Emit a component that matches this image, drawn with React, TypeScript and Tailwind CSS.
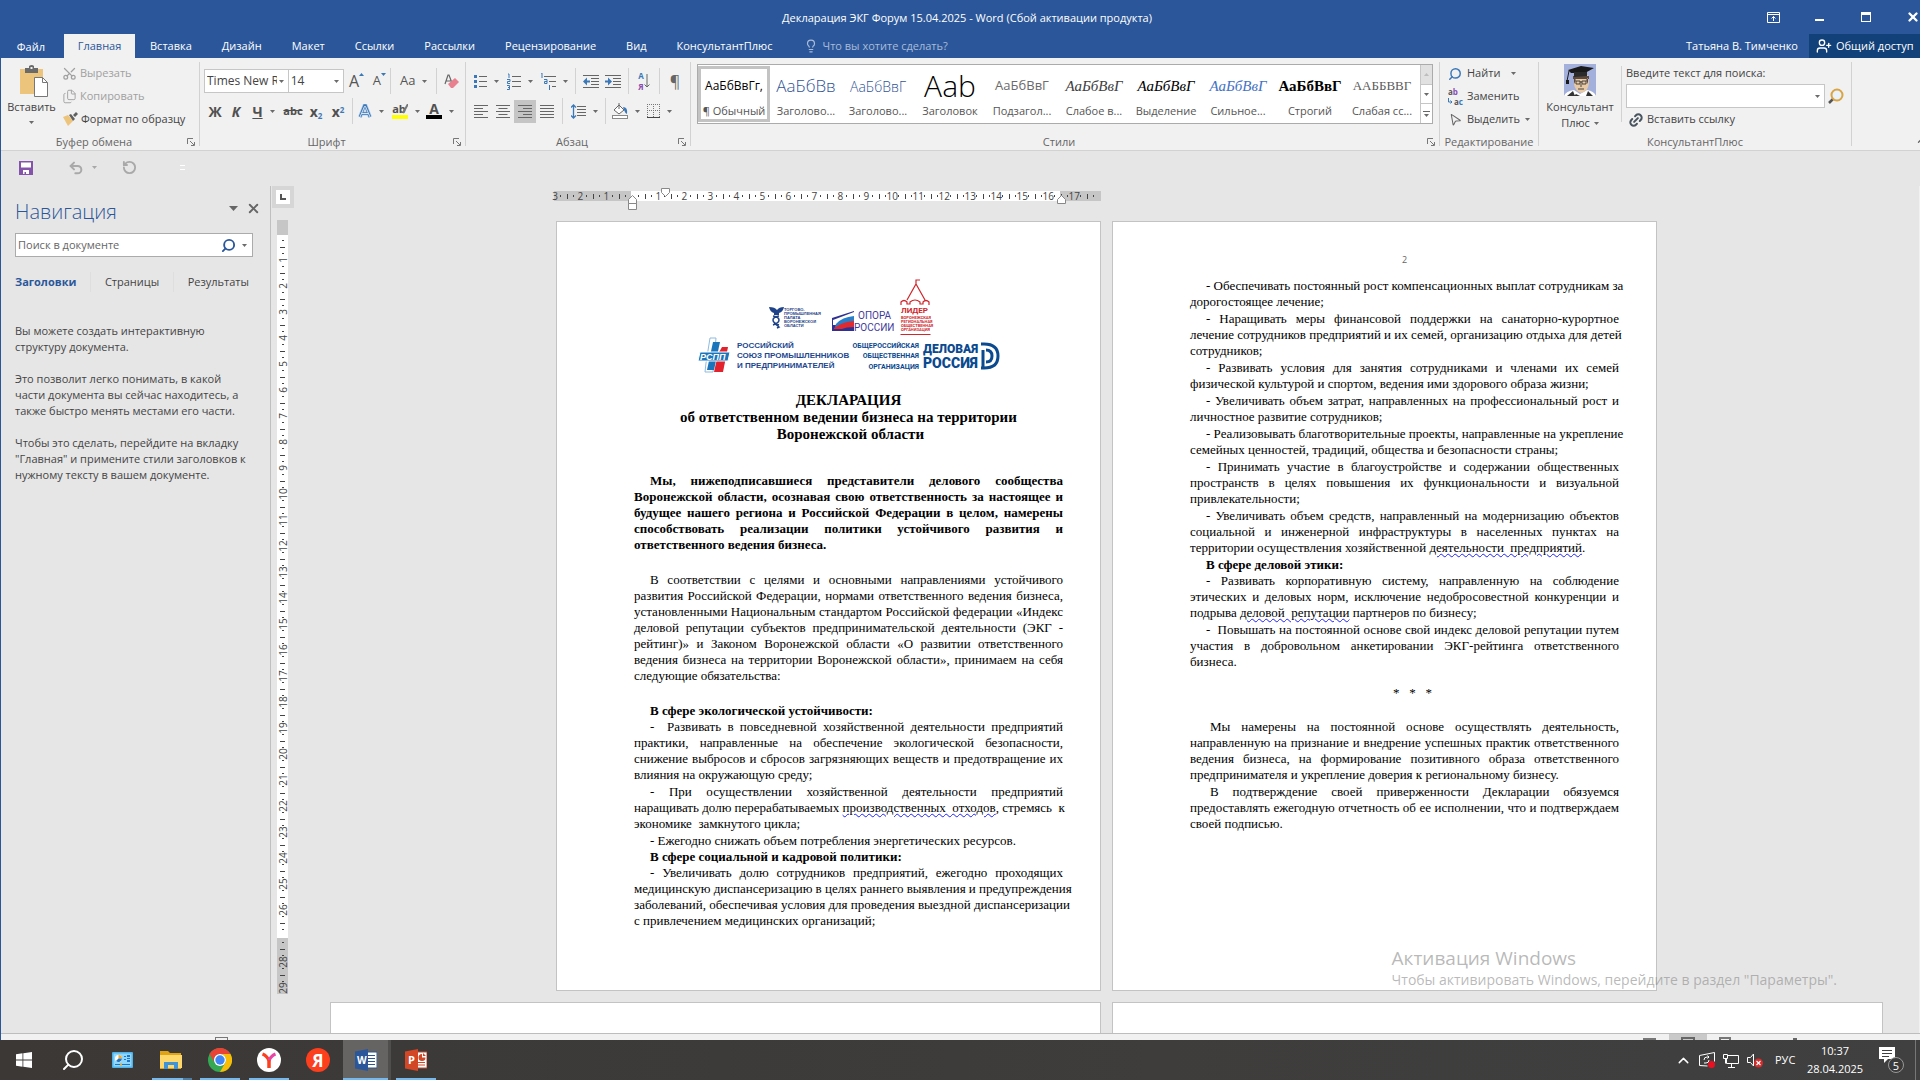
import type { ReactNode } from 'react';
import {
    ChevronUp,
    Lightbulb,
    Scissors,
    Search,
    Files,
    X,
    Undo2,
    RotateCcw,
    UserPlus,
    Link2,
    MousePointer2,
} from 'lucide-react';

const tabs = ['Вставка', 'Дизайн', 'Макет', 'Ссылки', 'Рассылки', 'Рецензирование', 'Вид', 'КонсультантПлюс'];

const styles = [
    { sample: 'АаБбВвГг,', name: '¶ Обычный', look: 'text-[12px] text-black' },
    { sample: 'АаБбВв', name: 'Заголово...', look: 'text-[17px] font-light text-[#2f5496]' },
    { sample: 'АаБбВвГ', name: 'Заголово...', look: 'text-[14px] font-light text-[#2f5496]' },
    { sample: 'Aab', name: 'Заголовок', look: 'text-[30px] leading-8 font-light text-black' },
    { sample: 'АаБбВвГ', name: 'Подзагол...', look: 'text-[13px] text-[#6a6a6a]' },
    { sample: 'АаБбВвГ', name: 'Слабое в...', look: "text-[15px] italic text-[#404040] font-['Liberation_Serif',serif]" },
    { sample: 'АаБбВвГ', name: 'Выделение', look: "text-[15px] italic text-black font-['Liberation_Serif',serif]" },
    { sample: 'АаБбВвГ', name: 'Сильное...', look: "text-[15px] italic text-[#4472c4] font-['Liberation_Serif',serif]" },
    { sample: 'АаБбВвГ', name: 'Строгий', look: "text-[15px] font-bold text-black font-['Liberation_Serif',serif]" },
    { sample: 'ААББВВГ', name: 'Слабая сс...', look: "text-[13px] text-[#5a5a5a] font-['Liberation_Serif',serif]" },
];

function Wavy({ children }: { children: ReactNode }) {
    return (
        <span className="underline decoration-[#2020ff] decoration-wavy decoration-1 underline-offset-1">{children}</span>
    );
}

function Caret({ className = '' }: { className?: string }) {
    return (
        <svg viewBox="0 0 5 3" className={`h-[3px] w-[5px] shrink-0 ${className}`} fill="#6b6b6b">
            <path d="M0 0h5L2.5 3z" />
        </svg>
    );
}

function Sep() {
    return <div className="mx-1 h-[26px] w-px bg-[#d2d2d2]" />;
}

function Tool({ label, width, arrow, active, children }: any) {
    return (
        <button
            aria-label={label}
            className={`flex h-[23px] items-center justify-center gap-[7px] ${width} ${active ? 'bg-[#c5c5c5]' : ''}`}
        >
            {children}
            {arrow && <Caret />}
        </button>
    );
}

function Group({ title, launcher, className = '', children }: any) {
    return (
        <section className={`my-1 flex flex-col border-r border-[#d2d2d2] ${className}`}>
            <div className="min-h-0 flex-1">{children}</div>
            <div className="flex h-3 items-start">
                <span className="flex-1 text-center text-[11px] leading-4 text-[#666]">{title}</span>
                {launcher && (
                    <button aria-label={`${title}: параметры`} className="mt-1 mr-1">
                        <svg viewBox="0 0 8 8" className="size-2" fill="none" stroke="#777">
                            <path d="M.5 6V.5H6M3 3l4 4M7.5 4v3.5H4" />
                        </svg>
                    </button>
                )}
            </div>
        </section>
    );
}

function Lines({ kind }: { kind: string }) {
    const widths = kind === 'full' ? [14, 14, 14, 14, 14] : [14, 9, 14, 9, 14];
    return (
        <svg viewBox="0 0 14 13" className="h-[13px] w-[14px]" fill="#666">
            {widths.map((w, i) => (
                <rect
                    key={i}
                    x={kind === 'right' ? 14 - w : kind === 'center' ? (14 - w) / 2 : 0}
                    y={i * 3}
                    width={w}
                    height="1"
                />
            ))}
        </svg>
    );
}

function Clipboard() {
    return (
        <Group title="Буфер обмена" launcher className="w-[199px]">
            <div className="flex">
                <button className="flex w-[61px] flex-col items-center pt-[3px] text-[11px] leading-4 text-[#444]">
                    <svg viewBox="0 0 28 32" className="ml-1 h-8 w-7">
                        <path d="M0 4h23v25H0z" fill="#edc47c" />
                        <path d="M5 3h4V1q3-2 5 0v2h4v5H5z" fill="#6a6a6a" />
                        <rect x="10.500" y="2" width="2" height="2" fill="#f1f1f1" />
                        <path d="M14.500 12.500h8l5 5v14h-13z" fill="#fff" stroke="#777" />
                        <path d="M22.500 12.500v5h5" fill="none" stroke="#777" />
                    </svg>
                    <span className="mt-[2px] text-[11px]">Вставить</span>
                    <Caret className="mt-[6px]" />
                </button>
                <div className="flex flex-col text-[11px] text-[#a0a0a0]">
                    <button className="flex h-[23px] items-center gap-[3px]">
                        <Scissors className="size-[15px] -rotate-90" strokeWidth={2} />
                        Вырезать
                    </button>
                    <button className="flex h-[23px] items-center gap-[3px]">
                        <Files className="size-[15px]" strokeWidth={1.5} />
                        Копировать
                    </button>
                    <button className="flex h-[23px] items-center gap-[3px] text-[#444]">
                        <svg viewBox="0 0 16 15" className="h-[15px] w-[16px]">
                            <path d="M1 5l5-2 5 6-5 5z" fill="#edc47c" />
                            <path d="M7 3l2-1 4 5-2 2zM11 3l3-3 2 2-3 3z" fill="#5f5f5f" />
                        </svg>
                        Формат по образцу
                    </button>
                </div>
            </div>
        </Group>
    );
}

function FontGroup() {
    return (
        <Group title="Шрифт" launcher className="w-[266px]">
            <div className="flex items-center pt-[6px] pl-1">
                <div className="flex h-6 w-[85px] items-center border border-[#c6c6c6] bg-white pr-1">
                    <input
                        aria-label="Шрифт"
                        defaultValue="Times New Roman"
                        className="w-0 flex-1 pl-[2px] text-[12px] text-[#444] outline-none"
                    />
                    <Caret className="ml-[2px]" />
                </div>
                <div className="flex h-6 w-[56px] items-center border border-l-0 border-[#c6c6c6] bg-white pr-1">
                    <input
                        aria-label="Размер шрифта"
                        defaultValue="14"
                        className="w-0 flex-1 pl-[2px] text-[12px] text-[#444] outline-none"
                    />
                    <Caret />
                </div>
                <Tool label="Увеличить размер" width="w-6">
                    <span className="flex text-[16px] text-[#555]">
                        A
                        <svg viewBox="0 0 5 3" className="mt-1 h-[3px] w-[5px]" fill="#3b78b8">
                            <path d="M0 3h5L2.500 0z" />
                        </svg>
                    </span>
                </Tool>
                <Tool label="Уменьшить размер" width="w-[22px]">
                    <span className="flex text-[13px] text-[#555]">
                        A
                        <svg viewBox="0 0 5 3" className="mt-[2px] h-[3px] w-[5px]" fill="#3b78b8">
                            <path d="M0 0h5L2.500 3z" />
                        </svg>
                    </span>
                </Tool>
                <div className="h-[26px] w-px bg-[#d2d2d2]" />
                <Tool label="Регистр" width="w-[45px]" arrow>
                    <span className="text-[13px] text-[#555]">Aa</span>
                </Tool>
                <div className="h-[26px] w-px bg-[#d2d2d2]" />
                <Tool label="Очистить формат" width="w-7">
                    <svg viewBox="0 0 15 14" className="h-[14px] w-[15px]">
                        <path d="M1 10L4 1h1l3 8M2 7h5" fill="none" stroke="#666" strokeWidth="1.200" />
                        <path d="M4 10l7-6 4 4-6 6H7z" fill="#e8808f" />
                    </svg>
                </Tool>
            </div>
            <div className="flex items-center pt-1 pl-1 text-[14px] font-bold text-[#505050]">
                <Tool label="Полужирный" width="w-[22px]">Ж</Tool>
                <Tool label="Курсив" width="w-5"><i>К</i></Tool>
                <Tool label="Подчёркнутый" width="w-[35px]" arrow><u>Ч</u></Tool>
                <Tool label="Зачёркнутый" width="w-6"><s className="text-[11px]">abc</s></Tool>
                <Tool label="Подстрочный" width="w-[22px]">
                    <span>x<sub className="text-[8px] text-[#3b78b8]">2</sub></span>
                </Tool>
                <Tool label="Надстрочный" width="w-[22px]">
                    <span>x<sup className="text-[8px] text-[#3b78b8]">2</sup></span>
                </Tool>
                <div className="ml-[3px] h-[26px] w-px bg-[#d2d2d2]" />
                <Tool label="Эффекты" width="w-9" arrow>
                    <svg viewBox="0 0 14 14" className="size-[14px]">
                        <path d="M2 13L6.500 1.500h1L12 13M4 9.500h6" fill="none" stroke="#b5d0ea" strokeWidth="4" />
                        <path d="M2 13L6.500 1.500h1L12 13M4 9.500h6" fill="none" stroke="#3b78b8" strokeWidth="2.600" />
                        <path d="M2 13L6.500 2.500h1L12 13M4 9.500h6" fill="none" stroke="#fff" strokeWidth=".8" />
                    </svg>
                </Tool>
                <Tool label="Цвет выделения" width="w-[34px]" arrow>
                    <span className="flex h-4 w-4 items-center justify-center border-b-4 border-[#ff0] text-[11px] leading-3">
                        ab
                        <svg viewBox="0 0 6 10" className="-ml-1 h-[10px] w-[6px] shrink-0" stroke="#777" strokeWidth="2">
                            <path d="M6 0L1 9" />
                        </svg>
                    </span>
                </Tool>
                <Tool label="Цвет текста" width="w-[34px]" arrow>
                    <span className="flex h-4 w-4 items-center justify-center border-b-4 border-black text-[14px] leading-3">
                        A
                    </span>
                </Tool>
            </div>
        </Group>
    );
}

function ParagraphGroup() {
    return (
        <Group title="Абзац" launcher className="w-[225px]">
            <div className="flex items-center pt-[6px] pl-1">
                <Tool label="Маркеры" width="w-[33px]" arrow>
                    <svg viewBox="0 0 13 15" className="h-[15px] w-[13px]">
                        <path d="M0 1h3v3H0zM0 6h3v3H0zM0 11h3v3H0z" fill="#3b78b8" />
                        <path d="M5 2.500h8M5 7.500h8M5 12.500h8" stroke="#666" />
                    </svg>
                </Tool>
                <Tool label="Нумерация" width="w-[34px]" arrow>
                    <svg viewBox="0 0 14 17" className="h-[17px] w-[14px]">
                        <path d="M1 1h1v4M0 6.500h3v2H.5v2H3M0 12.500h2.500v4H0M1 14.500h1" fill="none" stroke="#3b78b8" />
                        <path d="M5 3.500h9M5 8.500h9M5 13.500h9" stroke="#666" />
                    </svg>
                </Tool>
                <Tool label="Многоуровневый список" width="w-[34px]" arrow>
                    <svg viewBox="0 0 16 17" className="h-[17px] w-4">
                        <path d="M1 0h1v5M4 6.500h3v4H4.500v-2H7M9.500 12v5" fill="none" stroke="#3b78b8" />
                        <path d="M4 3.500h12M9 8.500h7M12 13.500h4" stroke="#666" />
                    </svg>
                </Tool>
                <Sep />
                <Tool label="Уменьшить отступ" width="w-[22px]">
                    <svg viewBox="0 0 16 13" className="h-[13px] w-4">
                        <path d="M0 .5h16M8 3.500h8M8 6.500h8M8 9.500h8M0 12.500h16" stroke="#666" />
                        <path d="M0 6.500l4-4v3h3v2H4v3z" fill="#3b78b8" />
                    </svg>
                </Tool>
                <Tool label="Увеличить отступ" width="w-[22px]">
                    <svg viewBox="0 0 16 13" className="h-[13px] w-4">
                        <path d="M0 .5h16M8 3.500h8M8 6.500h8M8 9.500h8M0 12.500h16" stroke="#666" />
                        <path d="M7 6.500l-4-4v3H0v2h3v3z" fill="#3b78b8" />
                    </svg>
                </Tool>
                <Sep />
                <Tool label="Сортировка" width="w-[22px]">
                    <span className="flex">
                        <span className="flex flex-col text-[8px] leading-[11px] font-bold text-[#3b78b8]">
                            <span>А</span>
                            <span className="text-[#8e4bb0]">Я</span>
                        </span>
                        <svg viewBox="0 0 6 14" className="mt-1 h-[14px] w-[6px]" fill="none" stroke="#666">
                            <path d="M3 0v13M.5 10.500L3 13l2.500-2.500" />
                        </svg>
                    </span>
                </Tool>
                <Sep />
                <Tool label="Знаки абзаца" width="w-[22px]">
                    <span className="text-[16px] text-[#666]">¶</span>
                </Tool>
            </div>
            <div className="flex items-center pt-1 pl-1">
                <Tool label="По левому краю" width="w-[22px]"><Lines kind="left" /></Tool>
                <Tool label="По центру" width="w-[22px]"><Lines kind="center" /></Tool>
                <Tool label="По правому краю" width="w-[22px]" active><Lines kind="right" /></Tool>
                <Tool label="По ширине" width="w-[22px]"><Lines kind="full" /></Tool>
                <Sep />
                <Tool label="Интервал" width="w-[34px]" arrow>
                    <svg viewBox="0 0 15 15" className="size-[15px]">
                        <path d="M2.500 1v13M0 3.500L2.500 1 5 3.500M0 11.500L2.500 14 5 11.500" fill="none" stroke="#3b78b8" strokeWidth="1.300" />
                        <path d="M6 2.500h9M6 5.500h9M6 8.500h9M6 11.500h9" stroke="#666" />
                    </svg>
                </Tool>
                <Sep />
                <Tool label="Заливка" width="w-[32px]" arrow>
                    <svg viewBox="0 0 16 16" className="size-4">
                        <path d="M2 7l5-5 5 5-5 4zM7 0v6" fill="#fff" stroke="#666" />
                        <path d="M11 4q5 0 4 7-2-1-3-4z" fill="#3b78b8" />
                        <rect x=".5" y="12.500" width="15" height="3" fill="#fff" stroke="#888" />
                    </svg>
                </Tool>
                <Tool label="Границы" width="w-[34px]" arrow>
                    <svg viewBox="0 0 13 14" className="h-[14px] w-[13px]" fill="none" stroke="#777">
                        <path d="M.5 0v13M6.500 0v13M12.500 0v13M0 .5h13M0 6.500h13" strokeDasharray="1 1" />
                        <path d="M0 13.500h13" stroke="#444" />
                    </svg>
                </Tool>
            </div>
        </Group>
    );
}

function StylesGroup() {
    return (
        <Group title="Стили" launcher className="min-w-0 flex-1">
            <div className="mt-[2px] mr-[6px] ml-[6px] flex h-[60px] border border-[#ababab] bg-white">
                <div className="flex flex-1 justify-between pr-[2px]">
                    {styles.map((s, i) => (
                        <button
                            key={i}
                            className={`my-px flex w-[72px] flex-col items-center border-[3px] ${i === 0 ? 'border-[#c3c3c3]' : 'border-transparent'}`}
                        >
                            <span className="flex h-[34px] items-center">
                                <span className={`whitespace-nowrap ${s.look}`}>{s.sample}</span>
                            </span>
                            <span className="h-4 text-[11px] leading-4 whitespace-nowrap text-[#555]">{s.name}</span>
                        </button>
                    ))}
                </div>
                <div className="flex w-[14px] flex-col border-l border-[#c6c6c6]">
                    <button aria-label="Вверх" className="flex flex-1 items-center justify-center bg-[#e1e1e1]">
                        <Caret className="rotate-180 opacity-30" />
                    </button>
                    <button aria-label="Вниз" className="flex flex-1 items-center justify-center border-y border-[#c6c6c6]">
                        <Caret />
                    </button>
                    <button aria-label="Все стили" className="flex flex-1 flex-col items-center justify-center gap-[2px]">
                        <span className="h-px w-[7px] bg-[#666]" />
                        <Caret />
                    </button>
                </div>
            </div>
        </Group>
    );
}

function EditingGroup() {
    return (
        <Group title="Редактирование" className="w-[99px]">
            <div className="flex flex-col pl-2 text-[11px] text-[#444]">
                <button className="flex h-[23px] items-center gap-[5px]">
                    <Search className="size-[14px] -scale-x-100 text-[#3b78b8]" strokeWidth={2.5} />
                    Найти <Caret className="ml-[6px]" />
                </button>
                <button className="flex h-[23px] items-center gap-[3px]">
                    <svg viewBox="0 0 16 18" className="h-[18px] w-4" fontSize="8" fontWeight="bold">
                        <text x="0" y="7" fill="#555">a<tspan fill="#8e4bb0">b</tspan></text>
                        <text x="6" y="17" fill="#555">a<tspan fill="#3b78b8">c</tspan></text>
                        <path d="M.5 10v4H4M2.500 12.500L4 14l-1.500 1.500" fill="none" stroke="#3b78b8" />
                    </svg>
                    Заменить
                </button>
                <button className="flex h-[23px] items-center gap-[5px]">
                    <MousePointer2 className="size-[14px] rotate-12 text-[#666]" strokeWidth={1.8} />
                    Выделить <Caret />
                </button>
            </div>
        </Group>
    );
}

function ConsultantGroup() {
    return (
        <Group title="КонсультантПлюс" className="w-[313px]">
            <div className="flex">
                <button className="flex w-[82px] flex-col items-center pt-[2px] text-[11px] leading-4 text-[#444]">
                    <svg viewBox="0 0 32 32" className="size-8">
                        <rect width="32" height="32" fill="#a3b0dc" />
                        <path d="M0 32q2-5 10-6l6 4 7-4q7 1 9 6z" fill="#fff" />
                        <path d="M3 32l6-5 2 5zM12 30l4 2h-6zM22 32l2-5 5 5z" fill="#333" />
                        <path d="M10 11h14l1 8q-1 9-8 10-6-2-7-9z" fill="#e9c9a4" />
                        <path d="M9 12h16v3H9zM10 20v-6l2 2zM24 20v-6l-2 2z" fill="#5a4a3f" />
                        <path d="M4 6l13-4 13 2-9 5-14 0z" fill="#1a1a1a" />
                        <path d="M10 8h13v4l-13 1z" fill="#2b2b2b" />
                        <path d="M5 7l-2 10" stroke="#1a1a1a" />
                        <path d="M2 16h3v4H2z" fill="#1a1a1a" />
                        <path d="M12 17h4v3h-4zM18 17h4v3h-4zM16 18h2M17 20v3M14 25h6" fill="none" stroke="#333" strokeWidth=".9" />
                    </svg>
                    <span className="mt-[3px]">Консультант</span>
                    <span className="flex items-center gap-1">
                        Плюс <Caret />
                    </span>
                </button>
                <div className="mt-1 h-[56px] w-px bg-[#d2d2d2]" />
                <div className="flex flex-1 flex-col pl-1 text-[11px] text-[#444]">
                    <label htmlFor="consultant" className="h-[22px] leading-[22px]">
                        Введите текст для поиска:
                    </label>
                    <div className="flex items-center gap-[3px]">
                        <div className="flex h-6 w-[199px] items-center border border-[#c6c6c6] bg-white pr-1">
                            <input id="consultant" className="w-0 flex-1 px-1 outline-none" />
                            <Caret />
                        </div>
                        <button aria-label="Искать">
                            <svg viewBox="0 0 16 16" className="size-4">
                                <path d="M5 11l-4 4" stroke="#555" strokeWidth="2.500" />
                                <circle cx="9" cy="7" r="5.500" fill="#e9f2fa" stroke="#d9a441" strokeWidth="2" />
                            </svg>
                        </button>
                    </div>
                    <button className="flex h-[23px] items-center gap-[3px] pl-[2px]">
                        <Link2 className="size-4 -rotate-45 text-[#4a5560]" strokeWidth={3} />
                        Вставить ссылку
                    </button>
                </div>
            </div>
        </Group>
    );
}

function Header() {
    return (
        <header className="bg-[#2b579a] text-white">
            <div className="grid h-[34px] grid-cols-[1fr_auto_1fr] items-center">
                <span />
                <h1 className="pt-[3px] pl-[14px] text-[11px]">Декларация ЭКГ Форум 15.04.2025 - Word (Сбой активации продукта)</h1>
                <div className="flex items-center justify-end">
                    <button aria-label="Параметры ленты" className="mr-[35px]">
                        <svg viewBox="0 0 13 11" className="h-[11px] w-[13px]" fill="none" stroke="#fff">
                            <path d="M.5.5h12v10H.5zM0 2.500h13M6.500 9V4.500M4.500 6.500l2-2 2 2" />
                        </svg>
                    </button>
                    <button aria-label="Свернуть" className="mr-[37px] flex h-3 items-end pb-[2px]">
                        <span className="h-[2px] w-[9px] bg-white" />
                    </button>
                    <button aria-label="Развернуть" className="mr-[35px] h-[10px] w-[10px] border border-t-[3px] border-white" />
                    <button aria-label="Закрыть">
                        <X className="size-[14px]" strokeWidth={4} />
                    </button>
                </div>
            </div>
            <nav className="flex h-6 items-stretch text-[11px]">
                <button className="w-[64px] pt-[2px] pr-3 text-right whitespace-nowrap text-white">
                    <span className="pr-[7px]">Файл</span>
                </button>
                <button className="w-[71px] bg-[#f1f1f1] text-[#2b579a]">Главная</button>
                {tabs.map((t) => (
                    <button key={t} className="px-[15px]">
                        {t}
                    </button>
                ))}
                <button className="flex items-center gap-[5px] pl-4 text-[#a9bbd9]">
                    <Lightbulb className="size-[14px]" />
                    Что вы хотите сделать?
                </button>
                <span className="ml-auto pr-[11px] leading-6">Татьяна В. Тимченко</span>
                <button className="flex w-[111px] items-center gap-1 bg-[#124078] pl-[7px] whitespace-nowrap">
                    <UserPlus className="size-4" strokeWidth={2} />
                    Общий доступ
                </button>
            </nav>
        </header>
    );
}

function NavPane() {
    return (
        <aside className="w-[270px] shrink-0 border-r border-[#bfbfbf] pr-[17px] pl-[14px] text-[11px] text-[#444]">
            <div className="flex items-center pt-3">
                <h2 className="flex-1 text-[20px] leading-7 font-light text-[#2b579a]">Навигация</h2>
                <button aria-label="Параметры панели">
                    <svg viewBox="0 0 9 5" className="mr-2 mb-2 h-[5px] w-[9px]" fill="#666">
                        <path d="M0 0h9L4.500 5z" />
                    </svg>
                </button>
                <button aria-label="Закрыть панель" className="-mr-2 mb-2">
                    <X className="size-[15px] text-[#666]" strokeWidth={3} />
                </button>
            </div>
            <div className="mt-[7px] flex h-6 items-center border border-[#ababab] bg-white pr-[5px]">
                <input
                    aria-label="Поиск в документе"
                    placeholder="Поиск в документе"
                    className="w-0 flex-1 pl-[2px] outline-none placeholder:text-[#666]"
                />
                <Search className="mr-[6px] size-[15px] -scale-x-100 text-[#2b579a]" strokeWidth={3} />
                <Caret />
            </div>
            <div className="mt-[15px] flex items-center justify-between pr-1">
                <button className="font-bold text-[#2b579a]">Заголовки</button>
                <span className="h-5 w-px bg-[#dedede]" />
                <button>Страницы</button>
                <span className="h-5 w-px bg-[#dedede]" />
                <button>Результаты</button>
            </div>
            <div className="mt-[31px] -mr-4 flex flex-col gap-4 leading-4 text-[#444]">
                <p>Вы можете создать интерактивную<br />структуру документа.</p>
                <p>Это позволит легко понимать, в какой<br />части документа вы сейчас находитесь, а<br />также быстро менять местами его части.</p>
                <p>Чтобы это сделать, перейдите на вкладку<br />"Главная" и примените стили заголовков к<br />нужному тексту в вашем документе.</p>
            </div>
        </aside>
    );
}

// one centimetre of ruler: long tick, dot, number, dot
function HorizontalCm({ n }: { n: number | null }) {
    return (
        <div className="grid w-[26px] shrink-0 grid-cols-4 items-center justify-items-center">
            <span className="h-[5px] w-px bg-[#444]" />
            <span className="h-[2px] w-px bg-[#444]" />
            <span className="flex w-0 justify-center">{n}</span>
            <span className="h-[2px] w-px bg-[#444]" />
        </div>
    );
}

function VerticalCm({ n }: { n: number | null }) {
    return (
        <div className="grid h-[26px] shrink-0 grid-rows-4 items-center justify-items-center">
            <span className="h-px w-[5px] bg-[#444]" />
            <span className="h-px w-[2px] bg-[#444]" />
            <span className="flex h-0 -rotate-90 items-center">{n}</span>
            <span className="h-px w-[2px] bg-[#444]" />
        </div>
    );
}

function VerticalRuler() {
    return (
        <div className="flex w-[23px] shrink-0 flex-col items-center text-[10px] leading-none text-[#444]">
            <button aria-label="Табуляция" className="flex size-[22px] items-center justify-center border-4 border-[#d6d6d6] bg-white">
                <span className="size-[6px] border-b-2 border-l-2 border-[#555]" />
            </button>
            <div className="mt-3 h-[774px] w-[11px] bg-[linear-gradient(to_bottom,#c6c6c6_15px,#fff_15px,#fff_718px,#c6c6c6_718px)]">
                <div className="flex h-6 items-end justify-center pb-[3px]">
                    <span className="h-px w-[2px] bg-[#444]" />
                </div>
                {Array.from({ length: 28 }, (_, i) => (
                    <VerticalCm key={i} n={i === 26 ? null : i + 1} />
                ))}
                <div className="grid h-[19px] grid-rows-3 items-center justify-items-center">
                    <span className="h-px w-[5px] bg-[#444]" />
                    <span className="h-px w-[2px] bg-[#444]" />
                    <span className="flex h-0 -rotate-90 items-center">29</span>
                </div>
            </div>
        </div>
    );
}

function HorizontalRuler() {
    return (
        <div className="relative -ml-[2px] flex h-[10px] w-[547px] text-[10px] leading-none text-[#444]">
            <div className="flex w-full bg-[linear-gradient(to_right,#c6c6c6_77px,#fff_77px,#fff_506px,#c6c6c6_506px)]">
                <div className="flex w-[10px] shrink-0 items-center justify-between pr-[3px]">
                    <span className="flex w-[2px] justify-center">3</span>
                    <span className="h-[2px] w-px bg-[#444]" />
                </div>
                {[2, 1, null, 1, 2, 3, 4, 5, 6, 7, 8, 9, 10, 11, 12, 13, 14, 15, 16, 17].map((n, i) => (
                    <HorizontalCm key={i} n={n} />
                ))}
                <div className="grid w-[13px] shrink-0 grid-cols-2 items-center justify-items-center">
                    <span className="h-[5px] w-px bg-[#444]" />
                    <span className="h-[2px] w-px bg-[#444]" />
                </div>
            </div>
            {/* indent markers */}
            <svg viewBox="0 0 9 15" className="absolute top-[4px] left-[74px] h-[15px] w-[9px]" fill="#fff" stroke="#888">
                <path d="M.5 8.500v-4l4-4 4 4v4zM.5 8.500h8v6h-8z" />
            </svg>
            <svg viewBox="0 0 9 9" className="absolute -top-[3px] left-[107px] size-[9px]" fill="#fff" stroke="#888">
                <path d="M.5.5h8v4l-4 4-4-4z" />
            </svg>
            <svg viewBox="0 0 9 9" className="absolute top-[4px] left-[503px] size-[9px]" fill="#fff" stroke="#888">
                <path d="M.5 8.500v-4l4-4 4 4v4z" />
            </svg>
        </div>
    );
}

function Para({ lines, bold, deep }: { lines: ReactNode[]; bold?: boolean; deep?: boolean }) {
    return (
        <p className={`${bold ? 'font-bold' : ''} ${lines.length > 1 ? 'pb-px' : ''}`}>
            {lines.map((line, i) => (
                <span
                    key={i}
                    className={`block whitespace-nowrap ${i > 0 ? '' : deep ? 'indent-5' : 'indent-4'} ${i < lines.length - 1 ? '[text-align-last:justify]' : ''}`}
                >
                    {line}
                </span>
            ))}
        </p>
    );
}

function Logos() {
    return (
        <svg
            viewBox="7 8 304 98"
            className="mx-auto h-[98px] w-[304px] font-['Liberation_Sans',Arial,sans-serif]"
            role="img"
            aria-label="Логотипы организаций"
        >
            {/* chamber of commerce */}
            <g fill="#1f4388">
                <path d="M79 37q6 0 8 3 2-3 7-3-1 5-5 6v2h-5v-2q-4-1-5-6z" />
                <path d="M83 46q6 1 6 4t-6 5M89 46q-6 1-6 4t6 5M84 53l5 4-2 1" fill="none" stroke="#1f4388" strokeWidth="1.500" />
                <g fontSize="4" fontWeight="bold">
                    <text x="94" y="41">ТОРГОВО-</text>
                    <text x="94" y="45">ПРОМЫШЛЕННАЯ</text>
                    <text x="94" y="49">ПАЛАТА</text>
                    <text x="94" y="53">ВОРОНЕЖСКОЙ</text>
                    <text x="94" y="57">ОБЛАСТИ</text>
                </g>
            </g>
            {/* opora */}
            <path d="M142 48l22-7v20h-22z" fill="#2e3192" />
            <path d="M143 50l21-8v5q-10 2-14 8h-7z" fill="#fff" />
            <path d="M146 54q6-7 18-8v6q-8 0-14 5h-5z" fill="#2a7fc9" />
            <path d="M144 58q8-6 20-7v6q-8 0-12 2h-8z" fill="#e02a2f" />
            <g fill="#3f3a9c" className="font-['Roboto',sans-serif]">
                <text x="168" y="49" fontSize="10">ОПОРА</text>
                <text x="164" y="61" fontSize="10">РОССИИ</text>
            </g>
            {/* leader */}
            <g fill="none" stroke="#d0252b" strokeWidth="1.200">
                <path d="M226 14v-4h4M217 30l9-16 9 16M211 35v-3q3-3 6 0v2h3v-2q5-4 10 0v2h3v-2q3-3 6 0v3M210.500 64.500h30" />
            </g>
            <g fill="#d0252b" fontWeight="bold" className="font-['Roboto',sans-serif]">
                <text x="211" y="43" fontSize="8">ЛИДЕР</text>
                <g fontSize="4">
                    <text x="211" y="49">ВОРОНЕЖСКАЯ</text>
                    <text x="211" y="53">РЕГИОНАЛЬНАЯ</text>
                    <text x="211" y="57">ОБЩЕСТВЕННАЯ</text>
                    <text x="211" y="61">ОРГАНИЗАЦИЯ</text>
                </g>
            </g>
            {/* rspp */}
            <path d="M20 68h6l-3 34h-8l1-9z" fill="#fff" stroke="#8dbbe0" />
            <path d="M23 72h7l-6 28h-7z" fill="#1b75bb" />
            <path d="M32 77h6l-5 25h-9l4-18z" fill="#e2232e" />
            <path d="M10 82h30l-2 9H8z" fill="#1b75bb" stroke="#fff" />
            <text x="10" y="90" fontSize="9" fontWeight="bold" fontStyle="italic" fill="#fff">РСПП</text>
            <g fill="#22478f" fontSize="8" fontWeight="bold">
                <text x="47" y="78">РОССИЙСКИЙ</text>
                <text x="47" y="88">СОЮЗ ПРОМЫШЛЕННИКОВ</text>
                <text x="47" y="98">И ПРЕДПРИНИМАТЕЛЕЙ</text>
            </g>
            {/* business russia */}
            <g fill="#0b4a8f" fontWeight="bold" className="font-['Roboto',sans-serif]">
                <g fontSize="7" textAnchor="end">
                    <text x="229" y="78">ОБЩЕРОССИЙСКАЯ</text>
                    <text x="229" y="88">ОБЩЕСТВЕННАЯ</text>
                    <text x="229" y="99">ОРГАНИЗАЦИЯ</text>
                </g>
                <text x="233" y="83" fontSize="12" fontWeight="900">ДЕЛОВАЯ</text>
                <text x="233" y="98" fontSize="14" fontWeight="900">РОССИЯ</text>
            </g>
            <path d="M291 74h3q14 0 14 12 0 12-14 12h-3M293 80v18M296 80q6 0 6 6t-6 6" fill="none" stroke="#0b4a8f" strokeWidth="3" />
        </svg>
    );
}

function PageOne() {
    return (
        <article className="h-[770px] w-[545px] border border-[#c3c3c3] bg-white pt-[56px] pr-[37px] pl-[77px]">
            <Logos />
            <h3 className="mt-[16px] text-center text-[15px] leading-[17px] font-bold">
                ДЕКЛАРАЦИЯ<br />об ответственном ведении бизнеса на территории<br />&nbsp;Воронежской области
            </h3>
            <div className="mt-[30px] text-[13px] leading-4">
                <Para
                    bold
                    lines={[
                        'Мы, нижеподписавшиеся представители делового сообщества',
                        'Воронежской области, осознавая свою ответственность за настоящее и',
                        'будущее нашего региона и Российской Федерации в целом, намерены',
                        'способствовать реализации политики устойчивого развития и',
                        'ответственного ведения бизнеса.',
                    ]}
                />
                <div className="h-[18px]" />
                <Para
                    lines={[
                        'В соответствии с целями и основными направлениями устойчивого',
                        'развития Российской Федерации, нормами ответственного ведения бизнеса,',
                        'установленными Национальным стандартом Российской федерации «Индекс',
                        'деловой репутации субъектов предпринимательской деятельности (ЭКГ -',
                        'рейтинг)» и Законом Воронежской области «О развитии ответственного',
                        'ведения бизнеса на территории Воронежской области», принимаем на себя',
                        'следующие обязательства:',
                    ]}
                />
                <div className="h-[18px]" />
                <Para bold lines={['В сфере экологической устойчивости:']} />
                <Para
                    lines={[
                        '- \u00a0Развивать в повседневной хозяйственной деятельности предприятий',
                        'практики, направленные на обеспечение экологической безопасности,',
                        'снижение выбросов и сбросов загрязняющих веществ и предотвращение их',
                        'влияния на окружающую среду;',
                    ]}
                />
                <Para
                    lines={[
                        '- При осуществлении хозяйственной деятельности предприятий',
                        <>наращивать долю перерабатываемых <Wavy>производственных&nbsp; отходов</Wavy>, стремясь&nbsp; к</>,
                        'экономике \u00a0замкнутого цикла;',
                    ]}
                />
                <Para lines={['- Ежегодно снижать объем потребления энергетических ресурсов.']} />
                <Para bold lines={['В сфере социальной и кадровой политики:']} />
                <Para
                    lines={[
                        '- Увеличивать долю сотрудников предприятий, ежегодно проходящих',
                        'медицинскую диспансеризацию в целях раннего выявления и предупреждения',
                        'заболеваний, обеспечивая условия для проведения выездной диспансеризации',
                        'с привлечением медицинских организаций;',
                    ]}
                />
            </div>
        </article>
    );
}

function PageTwo() {
    return (
        <article className="h-[770px] w-[545px] border border-[#c3c3c3] bg-white pt-[33px] pr-[37px] pl-[77px]">
            <div className="text-center text-[9px] leading-[10px] text-[#666] font-['Open_Sans',sans-serif]">2</div>
            <div className="mt-[13px] text-[13px] leading-4">
                <Para lines={['- Обеспечивать постоянный рост компенсационных выплат сотрудникам за', 'дорогостоящее лечение;']} />
                <Para
                    lines={[
                        '- Наращивать меры финансовой поддержки на санаторно-курортное',
                        'лечение сотрудников предприятий и их семей, организацию отдыха для детей',
                        'сотрудников;',
                    ]}
                />
                <Para
                    lines={[
                        '- Развивать условия для занятия сотрудниками и членами их семей',
                        'физической культурой и спортом, ведения ими здорового образа жизни;',
                    ]}
                />
                <Para lines={['- Увеличивать объем затрат, направленных на профессиональный рост и', 'личностное развитие сотрудников;']} />
                <Para
                    lines={[
                        '- Реализовывать благотворительные проекты, направленные на укрепление',
                        'семейных ценностей, традиций, общества и безопасности страны;',
                    ]}
                />
                <Para
                    lines={[
                        '- Принимать участие в благоустройстве и содержании общественных',
                        'пространств в целях повышения их функциональности и визуальной',
                        'привлекательности;',
                    ]}
                />
                <Para
                    lines={[
                        '- Увеличивать объем средств, направленный на модернизацию объектов',
                        'социальной и инженерной инфраструктуры в населенных пунктах на',
                        <>территории осуществления хозяйственной <Wavy>деятельности&nbsp; предприятий</Wavy>.</>,
                    ]}
                />
                <Para bold lines={['В сфере деловой этики:']} />
                <Para
                    lines={[
                        '- Развивать корпоративную систему, направленную на соблюдение',
                        'этических и деловых норм, исключение недобросовестной конкуренции и',
                        <>подрыва <Wavy>деловой&nbsp; репутации</Wavy> партнеров по бизнесу;</>,
                    ]}
                />
                <Para
                    lines={[
                        '- \u00a0Повышать на постоянной основе свой индекс деловой репутации путем',
                        'участия в добровольном анкетировании ЭКГ-рейтинга ответственного',
                        'бизнеса.',
                    ]}
                />
                <p className="mt-[14px] mb-[18px] text-center indent-4">*&nbsp;&nbsp; *&nbsp;&nbsp; *</p>
                <Para
                    deep
                    lines={[
                        'Мы намерены на постоянной основе осуществлять деятельность,',
                        'направленную на признание и внедрение успешных практик ответственного',
                        'ведения бизнеса, на формирование позитивного образа ответственного',
                        'предпринимателя и укрепление доверия к региональному бизнесу.',
                    ]}
                />
                <Para
                    deep
                    lines={[
                        'В подтверждение своей приверженности Декларации обязуемся',
                        'предоставлять ежегодную отчетность об ее исполнении, что и подтверждаем',
                        'своей подписью.',
                    ]}
                />
            </div>
        </article>
    );
}

function Taskbar() {
    return (
        <footer className="relative z-20 flex h-10 shrink-0 items-stretch bg-[linear-gradient(to_right,#3b3836,#404040)] text-[11px] text-white">
            <div className="flex gap-px">
                <button aria-label="Пуск" className="flex w-12 items-center justify-center">
                    <svg viewBox="0 0 16 16" className="size-4" fill="#fff">
                        <path d="M0 2.200l6.500-.9v6.300H0zM7.300 1.200L16 0v7.600H7.300zM0 8.400h6.500v6.300L0 13.800zM7.300 8.400H16V16l-8.700-1.200z" />
                    </svg>
                </button>
                <button aria-label="Поиск" className="flex w-12 items-center justify-center">
                    <Search className="size-6 -scale-x-100" strokeWidth={2} />
                </button>
                <button aria-label="Панель управления" className="flex w-12 items-center justify-center">
                    <svg viewBox="0 0 21 16" className="h-4 w-[21px]">
                        <rect width="21" height="16" rx="1" fill="#4db1ea" />
                        <rect x="1.500" y="1.500" width="18" height="13" fill="#8fd6fb" />
                        <circle cx="6.500" cy="6.500" r="3.500" fill="#fff" />
                        <path d="M6.500 6.500V3a3.500 3.500 0 013.500 3.500z" fill="#f5a623" />
                        <path d="M6.500 6.500H10a3.500 3.500 0 01-6 2.400z" fill="#1f74c4" />
                        <path d="M12 4h2v1h-2zM15 3h3v2h-3zM15 6h3v1h-3zM15 8h3v2h-3zM12 7h2v1h-2z" fill="#1f74c4" />
                        <path d="M3 12.500h15" stroke="#1f74c4" />
                        <path d="M8 11.500h2v2H8z" fill="#f5a623" />
                    </svg>
                </button>
                <button aria-label="Проводник" className="relative flex w-12 items-center justify-center">
                    <svg viewBox="0 0 22 18" className="h-[18px] w-[22px]">
                        <path d="M0 0h8l2 2h11v16H0z" fill="#e0a315" />
                        <path d="M0 4h22v13H0z" fill="#ffd86b" />
                        <path d="M4 11h14v7h-4v-4H8v4H4z" fill="#3e94d6" />
                    </svg>
                    <span className="absolute right-[3px] bottom-0 left-[5px] h-[2px] border-r-[9px] border-[#4d7ea6] bg-[#76b9ed]" />
                </button>
                <button aria-label="Chrome" className="relative flex w-12 items-center justify-center">
                    <svg viewBox="0 0 24 24" className="size-6">
                        <circle cx="12" cy="12" r="12" fill="#34a853" />
                        <path d="M1.600 6A12 12 0 0122.400 6H12a6 6 0 00-5.200 9z" fill="#ea4335" />
                        <path d="M22.400 6A12 12 0 0112 24l5.200-9A6 6 0 0012 6z" fill="#fbbc05" />
                        <circle cx="12" cy="12" r="6" fill="#fff" />
                        <circle cx="12" cy="12" r="4.700" fill="#4285f4" />
                    </svg>
                    <span className="absolute inset-x-1 bottom-0 h-[2px] bg-[#76b9ed]" />
                </button>
                <button aria-label="Яндекс Браузер" className="relative flex w-12 items-center justify-center">
                    <svg viewBox="0 0 24 24" className="size-6">
                        <circle cx="12" cy="12" r="12" fill="#fff" />
                        <path d="M5.500 6q5 2 6.500 7v7" fill="none" stroke="#fc3f1d" strokeWidth="3" />
                        <path d="M18.500 6q-5 2-6.500 7" fill="none" stroke="#e945a5" strokeWidth="3" />
                        <path d="M12 12v8" stroke="#fc3f1d" strokeWidth="3" />
                    </svg>
                    <span className="absolute inset-x-1 bottom-0 h-[2px] bg-[#76b9ed]" />
                </button>
                <button aria-label="Яндекс" className="flex w-12 items-center justify-center">
                    <span className="flex size-6 items-center justify-center rounded-full bg-[#fc3f1d] text-[17px] leading-none font-bold">Я</span>
                </button>
                <button aria-label="Word" className="relative flex w-12 items-center justify-center border-r-[3px] border-[#504e4c] bg-[#666462]">
                    <svg viewBox="0 0 22 22" className="size-[22px]">
                        <path d="M11 3h11v16H11z" fill="#fff" stroke="#2b579a" />
                        <path d="M13 6.500h7M13 9.500h7M13 12.500h7M13 15.500h7" stroke="#2b579a" />
                        <path d="M0 2.500L13 0v22L0 19.500z" fill="#2b579a" />
                        <text x="2" y="15" fontSize="10" fontWeight="bold" fill="#fff">W</text>
                    </svg>
                    <span className="absolute inset-x-0 bottom-0 h-[2px] bg-[#76b9ed]" />
                </button>
                <button aria-label="PowerPoint" className="relative flex w-12 items-center justify-center">
                    <svg viewBox="0 0 22 22" className="size-[22px]">
                        <path d="M11 3h11v16H11z" fill="#fff" stroke="#d24726" />
                        <path d="M13 13.500h7M13 16h7" stroke="#d24726" />
                        <path d="M17 5a3.500 3.500 0 103.500 3.500H17zM18 4v3h3" fill="#d24726" />
                        <path d="M0 2.500L13 0v22L0 19.500z" fill="#d24726" />
                        <text x="3" y="15" fontSize="11" fontWeight="bold" fill="#fff">P</text>
                    </svg>
                    <span className="absolute inset-x-1 bottom-0 h-[2px] bg-[#76b9ed]" />
                </button>
            </div>
            <div className="ml-auto flex items-center">
                <button aria-label="Скрытые значки" className="mr-[7px]">
                    <ChevronUp className="size-[17px]" strokeWidth={2} />
                </button>
                <svg viewBox="0 0 16 16" className="mr-2 size-4" fill="none" stroke="#fff">
                    <path d="M.5 3.500l15-3v9M.5 3.500v10l8 .5M5 8q0-3 3-3h2M8.500 3.500L10 5 8.500 6.500M10 8q0 3-3 3H5" />
                    <circle cx="12.500" cy="12.500" r="3.500" fill="#e81123" stroke="none" />
                </svg>
                <svg viewBox="0 0 16 15" className="mr-2 h-[15px] w-4" fill="none" stroke="#fff">
                    <path d="M5 2.500h10.500v8h-12V6M8.500 11v3M5 14.500h7M.5 1.500h4v4h-4zM2.500 5.500v5" />
                </svg>
                <svg viewBox="0 0 16 15" className="mr-3 h-[15px] w-4">
                    <path d="M.5 4.500h3l3-3.500v12l-3-3.500h-3z" fill="none" stroke="#fff" />
                    <circle cx="11.500" cy="10" r="4.500" fill="#d92b2b" />
                    <path d="M9.500 8l4 4M13.500 8l-4 4" stroke="#fff" strokeWidth="1.200" />
                </svg>
                <span className="w-[24px]">РУС</span>
                <div className="mr-2 ml-2 w-[56px] text-center leading-[18px]">
                    10:37
                    <br />
                    28.04.2025
                </div>
                <button aria-label="Уведомления" className="relative mr-[11px] ml-2 h-[26px] w-[25px]">
                    <svg viewBox="0 0 16 16" className="absolute top-0 left-0 size-4">
                        <path d="M0 0h16v12h-7l-4 4v-4H0z" fill="#fff" />
                        <path d="M3 3.500h10M3 6.500h10M3 9.500h7" stroke="#404040" />
                    </svg>
                    <span className="absolute right-0 bottom-0 flex size-4 items-center justify-center rounded-full border border-[#999] bg-[#3a3a3a] text-[11px] leading-none">
                        5
                    </span>
                </button>
                <span className="mr-1 h-10 w-px bg-[#777]" />
            </div>
        </footer>
    );
}

export default function App() {
    return (
        <div className="flex h-screen flex-col overflow-hidden bg-[#e6e6e6] font-['Open_Sans','Noto_Sans',sans-serif]">
            <Header />
            <div className="flex min-h-0 flex-1 flex-col border-l border-[#2b579a]">
                <div className="flex h-[93px] shrink-0 border-b border-[#d2d2d2] bg-[#f1f1f1]">
                    <Clipboard />
                    <FontGroup />
                    <ParagraphGroup />
                    <StylesGroup />
                    <EditingGroup />
                    <ConsultantGroup />
                    <div className="flex w-[68px] items-end justify-end pb-1">
                        <button aria-label="Свернуть ленту" className="-mr-[6px]">
                            <ChevronUp className="size-[10px] text-[#666]" strokeWidth={3} />
                        </button>
                    </div>
                </div>
                <div className="flex h-[35px] shrink-0 items-center pb-[2px] pl-[18px]">
                    <button aria-label="Сохранить">
                        <svg viewBox="0 0 14 14" className="size-[14px]">
                            <path d="M0 0h14v14H0z" fill="#8653ab" />
                            <path d="M2 1.500h10v5H2zM4 9h6v4H7v-2H5.500v2H4z" fill="#fff" />
                        </svg>
                    </button>
                    <button aria-label="Отменить" className="ml-[35px] flex items-center gap-2">
                        <Undo2 className="size-4 text-[#a9a9a9]" strokeWidth={3} />
                        <Caret className="opacity-50" />
                    </button>
                    <button aria-label="Повторить" className="ml-[25px]">
                        <RotateCcw className="size-[15px] text-[#a9a9a9]" strokeWidth={3} />
                    </button>
                    <span className="ml-[43px] flex flex-col gap-[3px]">
                        <span className="h-px w-[5px] bg-white" />
                        <span className="h-px w-[5px] bg-white" />
                    </span>
                </div>
                <div className="flex min-h-0 flex-1">
                    <NavPane />
                    <VerticalRuler />
                    <main className="relative flex min-w-0 flex-1 flex-col items-center overflow-hidden pt-[5px] font-['Liberation_Serif','Times_New_Roman',serif]">
                        <div className="w-[1101px] font-['Open_Sans',sans-serif]">
                            <HorizontalRuler />
                        </div>
                        <div className="mt-5 flex gap-[11px]">
                            <PageOne />
                            <PageTwo />
                        </div>
                        <div className="mt-[11px] flex gap-[11px]">
                            <div className="h-[545px] w-[771px] border border-[#c3c3c3] bg-white" />
                            <div className="h-[545px] w-[771px] border border-[#c3c3c3] bg-white" />
                        </div>
                        <div className="absolute right-[82px] bottom-[43px] font-['Open_Sans',sans-serif] whitespace-nowrap text-[#8a8a8a]/60">
                            <div className="text-[19px] leading-6">Активация Windows</div>
                            <div className="text-[14px] leading-5">Чтобы активировать Windows, перейдите в раздел "Параметры".</div>
                        </div>
                    </main>
                    <div className="w-px bg-[#f1f1f1]" />
                </div>
                <div className="flex h-[7px] shrink-0 items-start overflow-hidden border-t border-[#bdbdbd] bg-[#f1f1f1]">
                    <span className="mt-[3px] ml-[214px] h-3 w-[13px] border border-[#777]" />
                    <span className="mt-[4px] ml-auto h-3 w-[13px] border-2 border-[#777]" />
                    <span className="ml-[13px] flex h-5 w-[38px] justify-center bg-[#c9c9c9] pt-[3px]">
                        <span className="h-3 w-[14px] border-2 border-[#666]" />
                    </span>
                    <span className="mt-[3px] ml-3 h-3 w-3 border-2 border-[#777]" />
                    <span className="mt-[4px] mr-[123px] ml-[62px] h-3 w-1 bg-[#666]" />
                </div>
            </div>
            <Taskbar />
        </div>
    );
}
